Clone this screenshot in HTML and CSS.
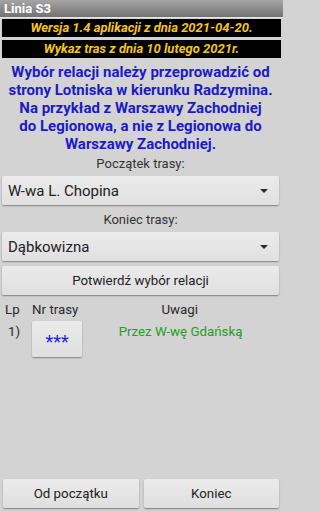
FILE: index.html
```html
<!DOCTYPE html>
<html lang="pl">
<head>
<meta charset="utf-8">
<link rel="stylesheet" href="styles.css">
</head>
<body>
<div class="screen">
  <div class="titlebar">Linia S3</div>
  <div class="content">
    <div class="infobar first">Wersja 1.4 aplikacji z dnia 2021-04-20.</div>
    <div class="infobar">Wykaz tras z dnia 10 lutego 2021r.</div>
    <p class="notice">Wybór relacji należy przeprowadzić od<br>strony Lotniska w kierunku Radzymina.<br>Na przykład z Warszawy Zachodniej<br>do Legionowa, a nie z Legionowa do<br>Warszawy Zachodniej.</p>
    <div class="label">Początek trasy:</div>
    <div class="select"><span>W-wa L. Chopina</span><span class="arrow"></span></div>
    <div class="label second">Koniec trasy:</div>
    <div class="select"><span>Dąbkowizna</span><span class="arrow"></span></div>
    <div class="btn confirm">Potwierdź wybór relacji</div>
    <div class="table">
      <div class="thead">
        <span class="c-lp">Lp</span>
        <span class="c-nr">Nr trasy</span>
        <span class="c-uw">Uwagi</span>
      </div>
      <div class="trow">
        <span class="c-lp num">1)</span>
        <span class="c-nr"><span class="btn stars">***</span></span>
        <span class="c-uw note">Przez W-wę Gdańską</span>
      </div>
    </div>
    <div class="bottom">
      <div class="btn half">Od początku</div>
      <div class="btn half">Koniec</div>
    </div>
  </div>
</div>
</body>
</html>
```
FILE: styles.css
```css
* { box-sizing: border-box; }
html, body { margin: 0; padding: 0; background: #d3d3d3; }
body {
  width: 288px;
  height: 512px;
  overflow: hidden;
  font-family: Roboto, "Liberation Sans", sans-serif;
  color: #2a2a2a;
}
.screen {
  height: 512px;
  display: flex;
  flex-direction: column;
}
.titlebar {
  height: 18px;
  width: 283px;
  background: linear-gradient(#a5a5a5, #727272);
  border-bottom: 1px solid #e6e6e6;
  color: #fff;
  font-weight: bold;
  font-size: 13px;
  line-height: 17px;
  padding-left: 4px;
}
.content {
  flex: 1;
  display: flex;
  flex-direction: column;
  padding: 0 9px 4px 2px;
}
.infobar {
  margin-top: 3px;
  width: 279px;
  height: 18px;
  background: #000;
  color: #f7c41e;
  font-style: italic;
  font-weight: bold;
  font-size: 13px;
  line-height: 18px;
  text-align: center;
}
.infobar.first { margin-top: 1px; }
.notice {
  margin: 5px 0 0;
  color: #1b1bc6;
  font-weight: bold;
  font-size: 15px;
  line-height: 18px;
  text-align: center;
  white-space: nowrap;
}
.label {
  margin-top: 2px;
  font-size: 13px;
  line-height: 18px;
  text-align: center;
  color: #333;
}
.label.second { margin-top: 6px; }
.select {
  margin-top: 3px;
  height: 29px;
  display: flex;
  align-items: center;
  justify-content: space-between;
  padding: 0 11px 0 6px;
  font-size: 15px;
  color: #222;
  background: linear-gradient(#ebebeb, #e0e0e0);
  border-radius: 2px;
  box-shadow: 0 1px 1.5px rgba(0,0,0,0.4);
}
.arrow {
  width: 0;
  height: 0;
  border-left: 4px solid transparent;
  border-right: 4px solid transparent;
  border-top: 4px solid #2a2a2a;
}
.btn {
  display: flex;
  align-items: center;
  justify-content: center;
  background: linear-gradient(#ebebeb, #dfdfdf);
  border-radius: 2px;
  box-shadow: 0 1px 1.5px rgba(0,0,0,0.4);
  font-size: 13.3px;
  color: #222;
}
.confirm {
  margin-top: 5px;
  height: 29px;
}
.table {
  margin-top: 6px;
  font-size: 13.3px;
  color: #2a2a2a;
}
.thead, .trow {
  display: flex;
  align-items: flex-start;
}
.thead { line-height: 18px; }
.c-lp { width: 31px; padding-left: 3px; }
.c-nr { width: 50px; }
.c-uw { width: 205px; text-align: center; }
.trow { margin-top: 2px; line-height: 18px; }
.num { padding-left: 6px; padding-top: 2px; }
.stars {
  width: 50px;
  height: 36px;
  color: #1f1fe6;
  font-size: 18px;
  padding-top: 5px;
}
.note {
  color: #21a021;
  padding-top: 2px;
}
.bottom {
  margin-top: auto;
  display: flex;
  gap: 5px;
  padding-left: 1px;
}
.half {
  flex: 1;
  height: 29px;
}
```
